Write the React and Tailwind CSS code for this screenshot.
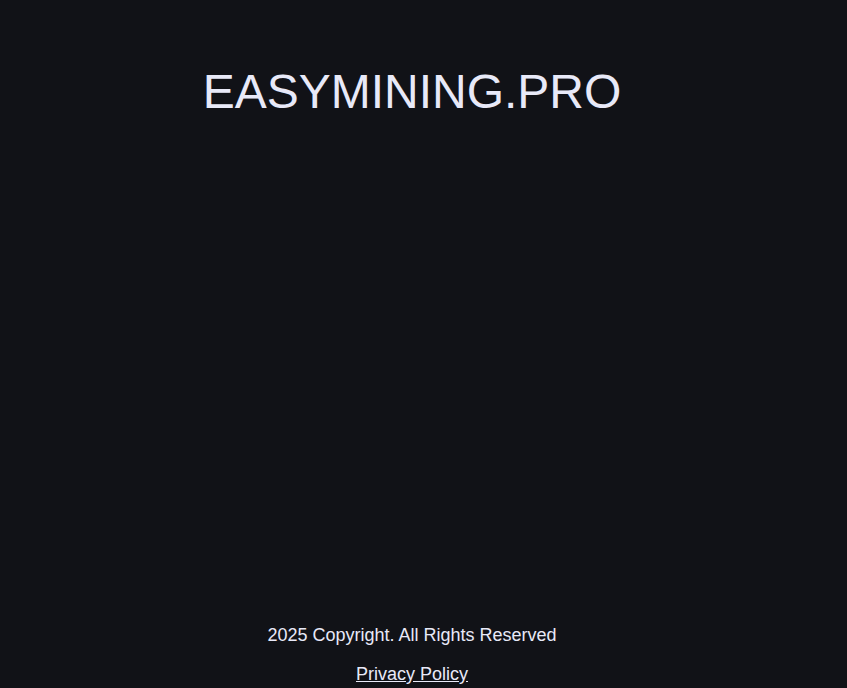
export default function App() {
  return (
    <div className="min-h-screen h-[688px] flex flex-col bg-[#111217] text-[#e8e9f8] pr-[23px] overflow-hidden" style={{ fontFamily: '"Liberation Sans", Arial, sans-serif' }}>
      <header className="pt-[64px] text-center">
        <h1 className="text-[48px] leading-[56px] font-normal">EASYMINING.PRO</h1>
      </header>
      <main className="flex-1"></main>
      <footer className="text-center text-[18px] pb-[4px]">
        <p className="leading-[20px]">2025 Copyright. All Rights Reserved</p>
        <p className="mt-[19px] leading-[20px]"><a href="#" className="underline">Privacy Policy</a></p>
      </footer>
    </div>
  );
}
